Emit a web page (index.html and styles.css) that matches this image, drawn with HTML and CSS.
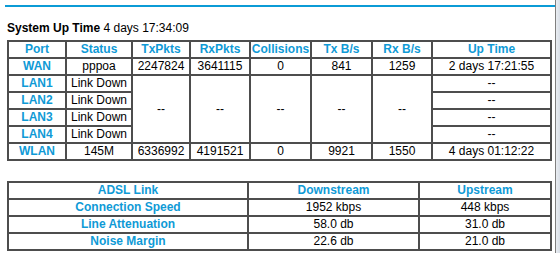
FILE: index.html
```html
<!DOCTYPE html>
<html>
<head>
<meta charset="utf-8">
<link rel="stylesheet" href="styles.css">
</head>
<body>
<div class="page">
  <div class="rule"></div>
  <div class="uptime"><b>System Up Time</b> 4 days 17:34:09</div>
  <table class="grid stats">
    <tr>
      <th class="c1">Port</th><th class="c2">Status</th><th class="c3">TxPkts</th><th class="c4">RxPkts</th><th class="c5">Collisions</th><th class="c6">Tx B/s</th><th class="c7">Rx B/s</th><th class="c8">Up Time</th>
    </tr>
    <tr><th>WAN</th><td>pppoa</td><td>2247824</td><td>3641115</td><td>0</td><td>841</td><td>1259</td><td>2 days 17:21:55</td></tr>
    <tr><th>LAN1</th><td>Link Down</td><td rowspan="4">--</td><td rowspan="4">--</td><td rowspan="4">--</td><td rowspan="4">--</td><td rowspan="4">--</td><td>--</td></tr>
    <tr><th>LAN2</th><td>Link Down</td><td>--</td></tr>
    <tr><th>LAN3</th><td>Link Down</td><td>--</td></tr>
    <tr><th>LAN4</th><td>Link Down</td><td>--</td></tr>
    <tr><th>WLAN</th><td>145M</td><td>6336992</td><td>4191521</td><td>0</td><td>9921</td><td>1550</td><td>4 days 01:12:22</td></tr>
  </table>
  <table class="grid adsl">
    <tr><th class="a1">ADSL Link</th><th class="a2">Downstream</th><th class="a3">Upstream</th></tr>
    <tr><th>Connection Speed</th><td>1952 kbps</td><td>448 kbps</td></tr>
    <tr><th>Line Attenuation</th><td>58.0 db</td><td>31.0 db</td></tr>
    <tr><th>Noise Margin</th><td>22.6 db</td><td>21.0 db</td></tr>
  </table>
</div>
<div class="frame-edge"></div>
</body>
</html>
```
FILE: styles.css
```css
html, body {
  margin: 0;
  padding: 0;
  background: #ffffff;
}
body {
  font-family: "Liberation Sans", Arial, sans-serif;
  font-size: 12px;
  color: #000000;
  width: 560px;
  height: 253px;
  overflow: hidden;
}
.page {
  padding: 5px 0 0 7px;
}
.rule {
  height: 2px;
  width: 550px;
  margin-left: -2px;
  background: #0b9bd6;
}
.uptime {
  margin-top: 14px;
  line-height: 15px;
  height: 15px;
  font-size: 12px;
}
.uptime b {
  font-weight: bold;
}
.grid {
  border-collapse: separate;
  border-spacing: 0;
  border: 1px solid #4d4d4d;
  table-layout: fixed;
  width: 545px;
}
.grid th, .grid td {
  border: 1px solid #4d4d4d;
  padding: 0;
  line-height: 15px;
  height: 15px;
  text-align: center;
  vertical-align: middle;
  white-space: nowrap;
  overflow: hidden;
  font-size: 12px;
}
.grid th {
  color: #0f9ad6;
  font-weight: bold;
}
.grid td {
  color: #000000;
  font-weight: normal;
}
.stats {
  margin-top: 4px;
}
.stats .c1 { width: 56px; }
.stats .c2 { width: 64px; }
.stats .c3 { width: 56px; }
.stats .c4 { width: 58px; }
.stats .c5 { width: 59px; }
.stats .c6 { width: 59px; }
.stats .c7 { width: 58px; }
.stats .c8 { width: 117px; }
.adsl {
  margin-top: 20px;
}
.adsl .a1 { width: 238px; }
.adsl .a2 { width: 169px; }
.adsl .a3 { width: 130px; }
.frame-edge {
  position: fixed;
  top: 0;
  left: 555px;
  width: 4px;
  height: 253px;
  border-left: 1px solid #7f7f7f;
  background: linear-gradient(to right, #e9edf2, #d8dee6);
}
```
